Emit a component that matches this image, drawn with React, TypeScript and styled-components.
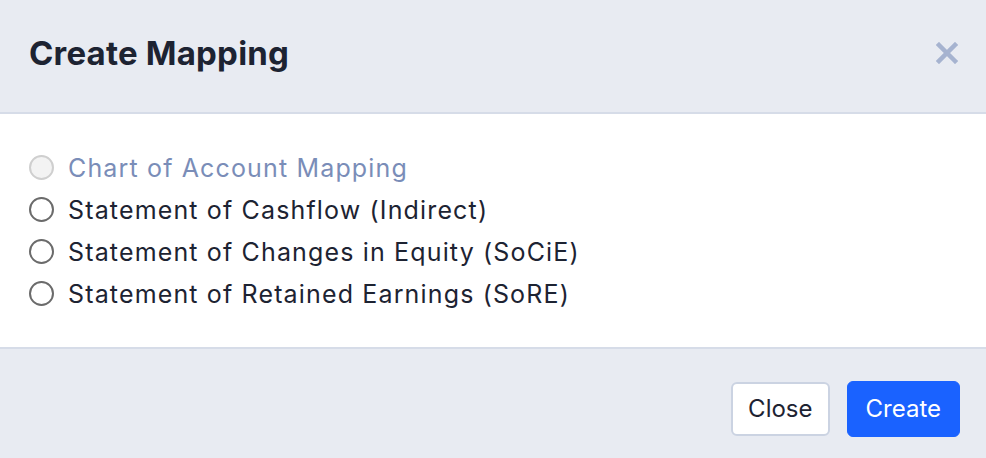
import React from "react";
import styled, { createGlobalStyle } from "styled-components";

const Global = createGlobalStyle`
  html, body { margin: 0; padding: 0; background: #ffffff; }
  body { font-family: Inter, "Noto Sans", "Liberation Sans", sans-serif; -webkit-font-smoothing: antialiased; }
  * { box-sizing: border-box; }
`;

const Modal = styled.div`
  width: 986px;
  height: 458px;
  display: flex;
  flex-direction: column;
  background: #ffffff;
`;

const Header = styled.div`
  height: 114px;
  flex: none;
  display: flex;
  align-items: center;
  justify-content: space-between;
  padding: 0 28px 6px 29px;
  background: #e8ebf2;
  border-bottom: 2px solid #d6dce8;
`;

const Title = styled.h5`
  margin: 0;
  font-size: 33px;
  font-weight: 700;
  color: #1d2332;
  letter-spacing: 0.2px;
`;

const CloseX = styled.button`
  width: 22px;
  height: 22px;
  border: 0;
  padding: 0;
  background: transparent;
  display: flex;
  align-items: center;
  justify-content: center;
  cursor: pointer;
`;

const Body = styled.div`
  flex: 1;
  display: flex;
  flex-direction: column;
  padding: 0 29px;
  justify-content: center;
  background: #ffffff;
`;

const Option = styled.label<{ disabled?: boolean }>`
  display: flex;
  align-items: center;
  gap: 14px;
  height: 42px;
  font-size: 25px;
  letter-spacing: 1.15px;
  color: ${(p) => (p.disabled ? "#7a8db8" : "#1d2332")};
  cursor: ${(p) => (p.disabled ? "default" : "pointer")};
`;

const Radio = styled.span<{ disabled?: boolean }>`
  width: 25px;
  height: 25px;
  border-radius: 50%;
  flex: none;
  border: 2px solid ${(p) => (p.disabled ? "#cfcfcf" : "#6b6b6b")};
  background: ${(p) => (p.disabled ? "#f3f3f3" : "#ffffff")};
`;

const Footer = styled.div`
  height: 111px;
  flex: none;
  display: flex;
  align-items: center;
  justify-content: flex-end;
  gap: 17px;
  padding: 10px 26px 0 29px;
  background: #e8ebf2;
  border-top: 2px solid #d6dce8;
`;

const Button = styled.button<{ primary?: boolean }>`
  height: ${(p) => (p.primary ? "56px" : "54px")};
  padding: 0 ${(p) => (p.primary ? "18px" : "15px")};
  font-family: inherit;
  font-size: 24px;
  border-radius: 6px;
  cursor: pointer;
  border: ${(p) => (p.primary ? "1px solid #1a62ff" : "2px solid #cbd3e2")};
  background: ${(p) => (p.primary ? "#1a62ff" : "#ffffff")};
  color: ${(p) => (p.primary ? "#ffffff" : "#1d2332")};
`;

const options = [
  { label: "Chart of Account Mapping", disabled: true },
  { label: "Statement of Cashflow (Indirect)" },
  { label: "Statement of Changes in Equity (SoCiE)" },
  { label: "Statement of Retained Earnings (SoRE)" },
];

export default function App() {
  return (
    <>
      <Global />
      <Modal>
        <Header>
          <Title>Create Mapping</Title>
          <CloseX aria-label="Close">
            <svg width="22" height="22" viewBox="0 0 22 22">
              <path d="M3 3 L19 19 M19 3 L3 19" stroke="#a6b3d0" strokeWidth="4.5" strokeLinecap="square" />
            </svg>
          </CloseX>
        </Header>
        <Body>
          {options.map((o) => (
            <Option key={o.label} disabled={o.disabled}>
              <Radio disabled={o.disabled} />
              {o.label}
            </Option>
          ))}
        </Body>
        <Footer>
          <Button>Close</Button>
          <Button primary>Create</Button>
        </Footer>
      </Modal>
    </>
  );
}
